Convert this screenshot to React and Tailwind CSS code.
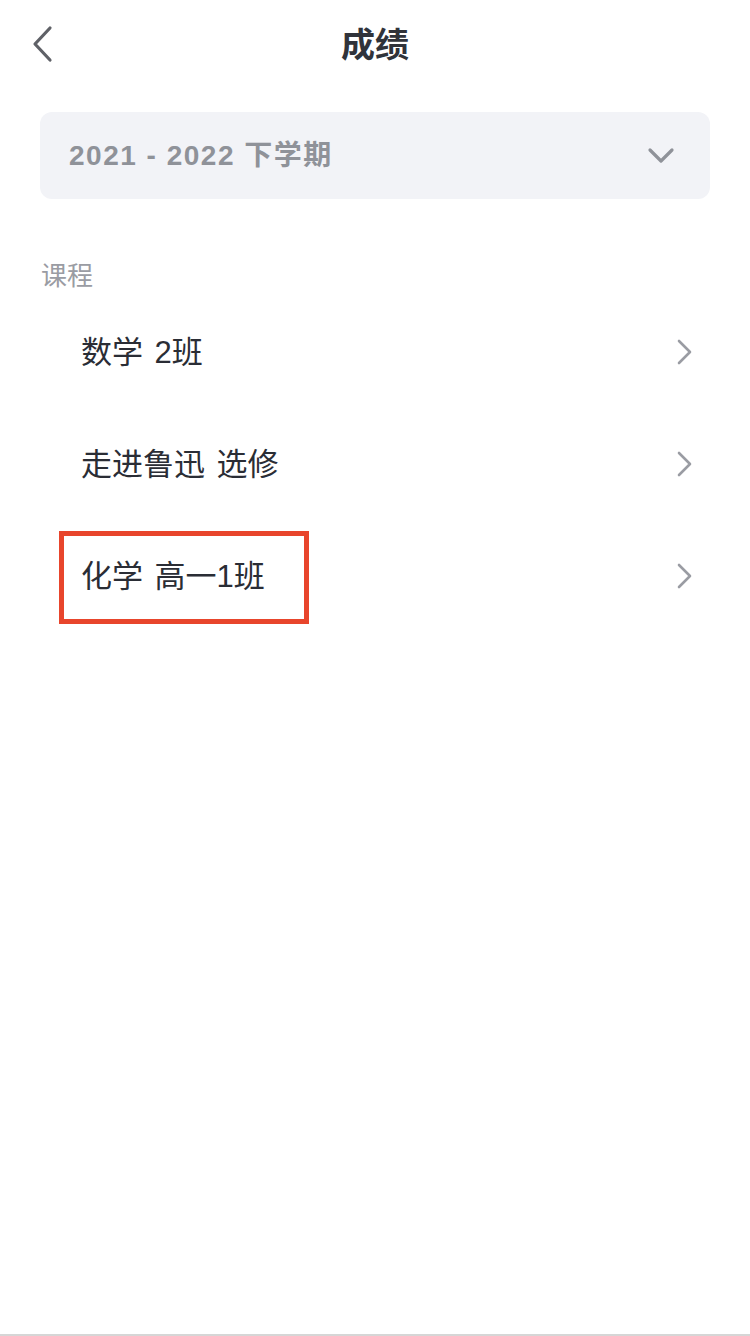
export default function App() {
  const courses = ["数学 2班", "走进鲁迅 选修", "化学 高一1班"];

  return (
    <div
      className="w-[750px] min-h-[1336px] bg-white border-b-2 border-[#d6d6d6] flex flex-col"
      style={{ fontFamily: '"Liberation Sans", "Noto Sans CJK SC", sans-serif' }}
    >
      <header className="relative h-[90px] flex items-center justify-center shrink-0">
        <svg className="absolute left-[30px] top-[24px]" width="26" height="40" viewBox="0 0 26 40" fill="none">
          <path d="M20 4 L5 20 L20 36" stroke="#5f6167" strokeWidth="3.2" strokeLinecap="round" strokeLinejoin="round" />
        </svg>
        <h1 className="text-[34px] font-bold text-[#30333a] leading-none">成绩</h1>
      </header>

      <div className="mx-[40px] mt-[22px] h-[87px] rounded-[12px] bg-[#f2f3f7] pl-[29px] pr-[34px] flex items-center justify-between">
        <span className="text-[28px] font-bold text-[#8f9299] tracking-[1.5px]">2021 - 2022 下学期</span>
        <svg width="30" height="20" viewBox="0 0 30 20" fill="none">
          <path d="M4 4 L15 15 L26 4" stroke="#8f9299" strokeWidth="3.2" strokeLinecap="round" strokeLinejoin="round" />
        </svg>
      </div>

      <div className="px-[41px] mt-[59px] h-[36px] flex items-center text-[26px] text-[#9a9ca3] leading-none">课程</div>

      <ul className="mt-[2px] px-[40px]">
        {courses.map((c, i) => (
          <li key={c} className="relative h-[112px] flex items-center justify-between pl-[41px] pr-[16px]">
            <span className="text-[31px] text-[#2a2d35] leading-none [word-spacing:3px]">{c}</span>
            <svg width="20" height="30" viewBox="0 0 20 30" fill="none">
              <path d="M5 4 L16 15 L5 26" stroke="#9a9ca3" strokeWidth="2.6" strokeLinecap="round" strokeLinejoin="round" />
            </svg>
            {i === 2 && (
              <div className="absolute left-[19px] top-[11px] w-[250px] h-[93px] border-[5px] border-[#e8452c]" />
            )}
          </li>
        ))}
      </ul>
    </div>
  );
}
